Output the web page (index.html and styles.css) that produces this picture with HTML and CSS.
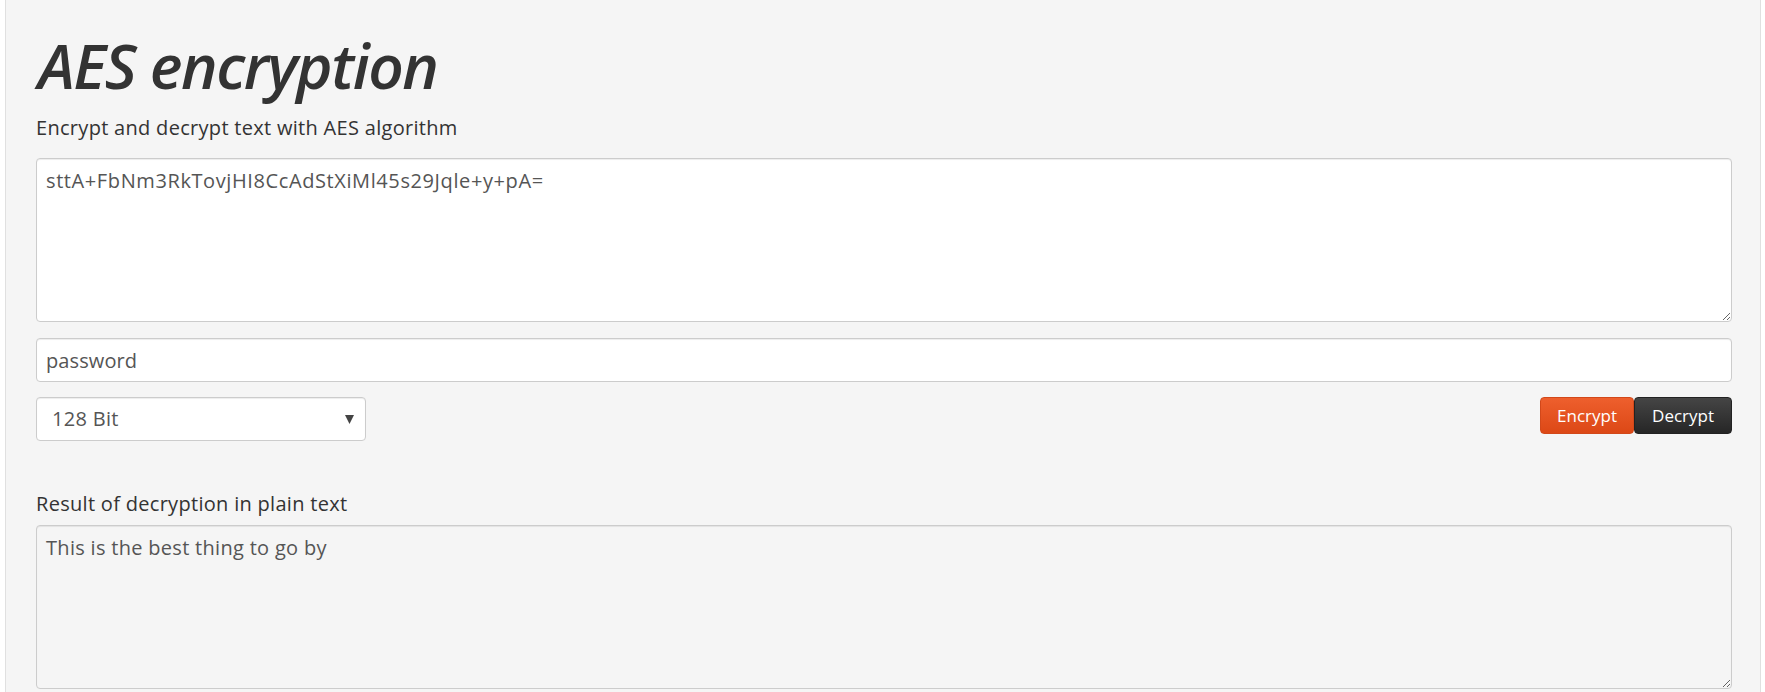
FILE: index.html
```html
<!DOCTYPE html>
<html lang="en">
<head>
<meta charset="utf-8">
<title>AES encryption</title>
<link rel="stylesheet" href="styles.css">
</head>
<body>
<div class="well">
  <h1 class="title">AES encryption</h1>
  <p class="lead">Encrypt and decrypt text with AES algorithm</p>
  <textarea class="field field-area field-cipher">sttA+FbNm3RkTovjHI8CcAdStXiMl45s29Jqle+y+pA=</textarea>
  <input class="field field-input" type="text" value="password">
  <div class="controls">
    <div class="select-wrap">
      <select class="field field-select">
        <option>128 Bit</option>
        <option>192 Bit</option>
        <option>256 Bit</option>
      </select>
      <svg class="caret" width="9" height="9" viewBox="0 0 9 9"><path d="M0 0H9L4.5 9Z" fill="#444"/></svg>
    </div>
    <div class="btn-group">
      <button class="btn btn-encrypt" type="button">Encrypt</button>
      <button class="btn btn-decrypt" type="button">Decrypt</button>
    </div>
  </div>
  <p class="label">Result of decryption in plain text</p>
  <textarea class="field field-area field-result" readonly>This is the best thing to go by</textarea>
</div>
</body>
</html>
```
FILE: styles.css
```css
html, body {
  margin: 0;
  padding: 0;
  background: #ffffff;
}
body {
  font-family: "Open Sans", "Noto Sans", sans-serif;
  color: #333333;
  overflow: hidden;
}
.well {
  margin: 0 4px 0 5px;
  min-height: 720px;
  box-sizing: border-box;
  background: #f5f5f5;
  border-left: 1px solid #e0e0e0;
  border-right: 1px solid #e0e0e0;
  padding: 34px 28px 0 30px;
  display: flex;
  flex-direction: column;
}
.title {
  margin: 0 0 0 2px;
  font-size: 62px;
  line-height: 62px;
  font-style: italic;
  font-weight: 600;
  letter-spacing: -1.5px;
  color: #333333;
}
.lead {
  margin: 19px 0 0;
  font-size: 20px;
  line-height: 26px;
  letter-spacing: 0.3px;
  color: #333333;
}
.field {
  box-sizing: border-box;
  width: 100%;
  font-family: "Open Sans", "Noto Sans", sans-serif;
  font-size: 20px;
  line-height: 26px;
  letter-spacing: 0.3px;
  color: #555555;
  background: #ffffff;
  border: 1px solid #cccccc;
  border-radius: 4px;
  box-shadow: inset 0 1px 1px rgba(0, 0, 0, 0.075);
  outline: none;
  margin: 0;
}
.field-area {
  display: block;
  height: 164px;
  padding: 9px 9px;
  resize: vertical;
}
.field-cipher {
  letter-spacing: 0.6px;
}
.lead + .field-area {
  margin-top: 17px;
}
.field-input {
  display: block;
  height: 44px;
  padding: 8px 9px;
  margin-top: 16px;
  letter-spacing: 0.1px;
}
.controls {
  margin-top: 15px;
  display: flex;
  justify-content: space-between;
  align-items: flex-start;
}
.select-wrap {
  position: relative;
  width: 330px;
}
.field-select {
  height: 44px;
  padding: 8px 30px 8px 15px;
  -webkit-appearance: none;
  appearance: none;
}
.caret {
  position: absolute;
  right: 12px;
  top: 18px;
  pointer-events: none;
}
.btn-group {
  display: flex;
}
.btn {
  font-family: "Open Sans", "Noto Sans", sans-serif;
  font-size: 17px;
  line-height: 21px;
  height: 37px;
  box-sizing: border-box;
  padding: 7px 16px 7px;
  color: #ffffff;
  border-radius: 4px;
  margin: 0;
  cursor: pointer;
}
.btn-encrypt {
  background: linear-gradient(#ee5f2d, #dc4816);
  border: 1px solid #d2481a;
}
.btn-decrypt {
  padding: 7px 17px 7px;
  background: linear-gradient(#454545, #262626);
  border: 1px solid #222222;
}
.label {
  margin: 50px 0 0;
  font-size: 20px;
  line-height: 26px;
  letter-spacing: 0.3px;
  color: #333333;
}
.field-result {
  margin-top: 8px;
  background: #f5f5f5;
}
```
